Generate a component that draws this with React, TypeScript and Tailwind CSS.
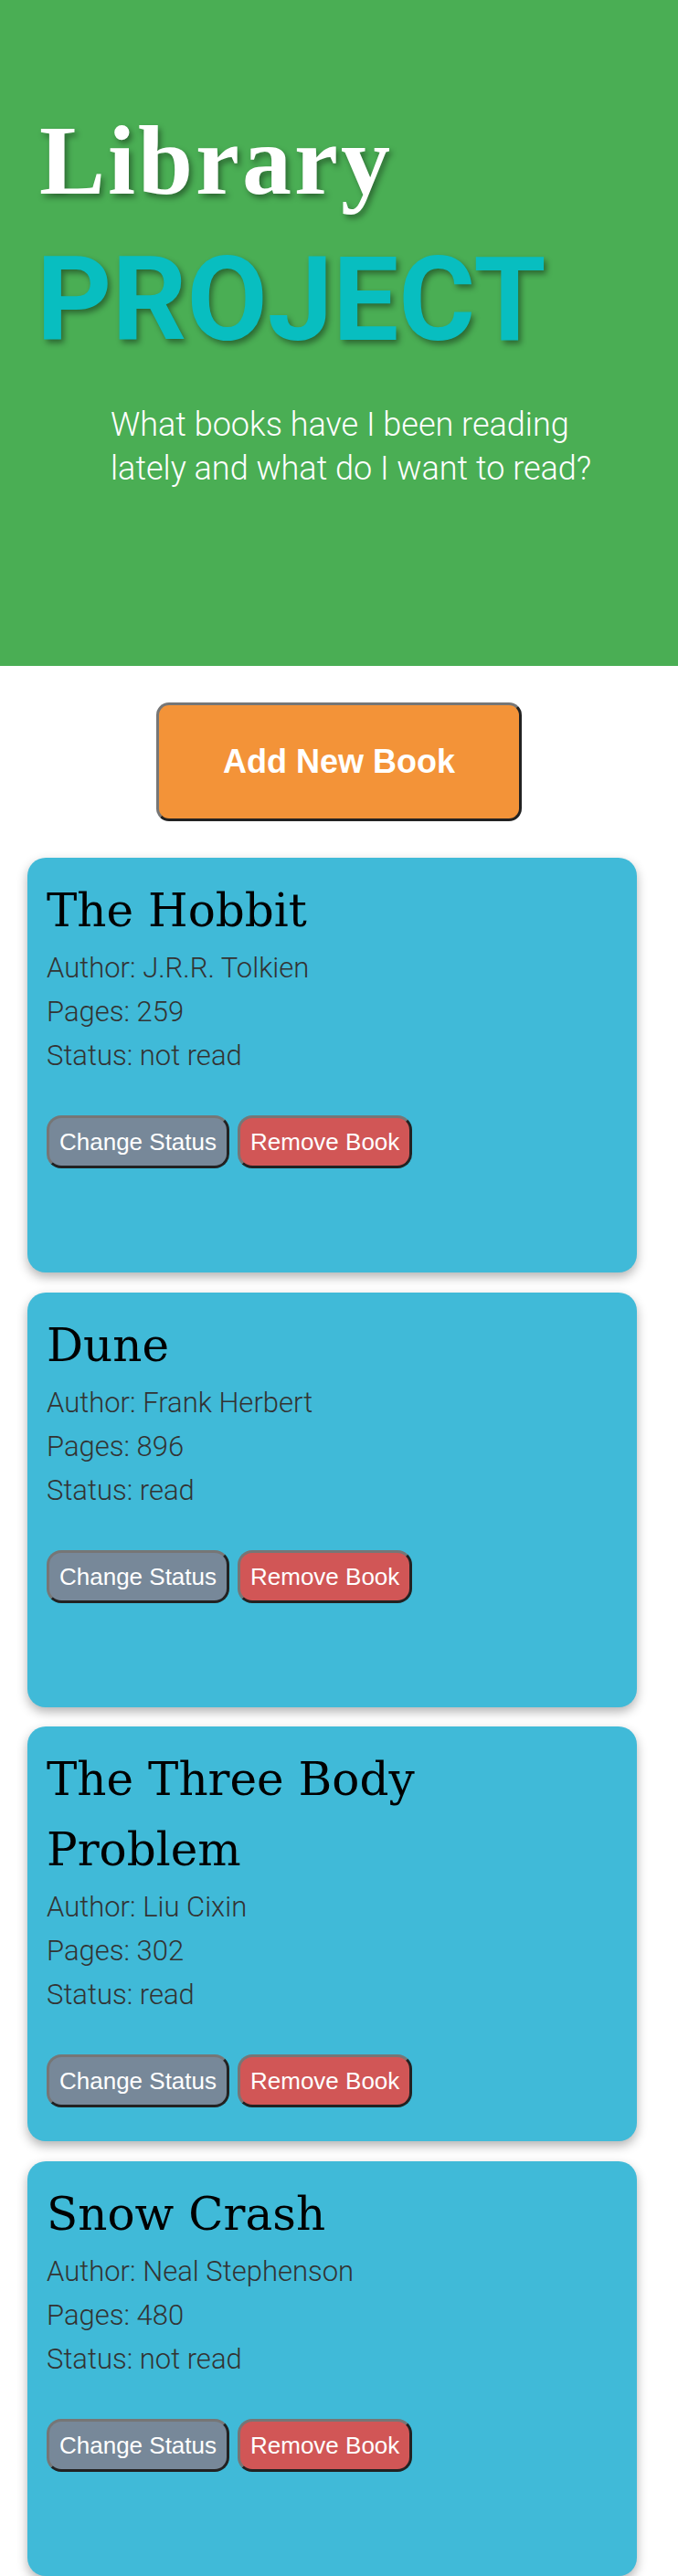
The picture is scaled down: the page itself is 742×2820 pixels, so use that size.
const books = [
  { title: "The Hobbit", author: "J.R.R. Tolkien", pages: 259, status: "not read" },
  { title: "Dune", author: "Frank Herbert", pages: 896, status: "read" },
  { title: "The Three Body Problem", author: "Liu Cixin", pages: 302, status: "read" },
  { title: "Snow Crash", author: "Neal Stephenson", pages: 480, status: "not read" },
];

function BookCard({ book }: { book: (typeof books)[number] }) {
  return (
    <div className="h-[454px] w-[667px] rounded-[20px] bg-[#40bad8] px-[21px] pt-[20px] shadow-[0_5px_12px_rgba(0,0,0,0.3)]">
      <h2 className="font-['DejaVu_Serif',serif] text-[50px] font-normal leading-[77px] text-black">
        {book.title}
      </h2>
      <div className="font-['Roboto',sans-serif] text-[31px] font-light leading-[48px] text-[#333]">
        <p>Author: {book.author}</p>
        <p>Pages: {book.pages}</p>
        <p>Status: {book.status}</p>
      </div>
      <div className="mt-[41px] flex gap-[9px] font-['Liberation_Sans',Arial,sans-serif] text-[26px] leading-[30px] text-white">
        <button className="rounded-[16px] border-[3px] border-t-[#767676] border-l-[#767676] border-b-[#222] border-r-[#222] bg-[#778899] p-[11px]">
          Change Status
        </button>
        <button className="rounded-[16px] border-[3px] border-t-[#767676] border-l-[#767676] border-b-[#222] border-r-[#222] bg-[#d15656] p-[11px]">
          Remove Book
        </button>
      </div>
    </div>
  );
}

export default function App() {
  return (
    <div className="min-h-screen w-[742px] bg-white">
      <header className="h-[729px] bg-[#4aae54] pt-[122px]">
        <h1 className="pl-[43px] font-['Liberation_Serif',serif] text-[108px] font-bold leading-[108px] tracking-[3px] text-white [text-shadow:3px_4px_6px_rgba(0,0,0,0.4)]">
          Library
        </h1>
        <div className="mt-[34px] pl-[40px] font-['Roboto',sans-serif] text-[128px] font-bold leading-[128px] text-[#08bec0] [text-shadow:3px_4px_6px_rgba(0,0,0,0.4)]">
          PROJECT
        </div>
        <p className="ml-[121px] mt-[49px] w-[560px] font-['Roboto',sans-serif] text-[36px] font-light leading-[48px] text-white">
          What books have I been reading lately and what do I want to read?
        </p>
      </header>

      <div className="flex justify-center pt-[40px]">
        <button className="h-[130px] w-[400px] rounded-[14px] border-[3px] border-t-[#767676] border-l-[#767676] border-b-[#222] border-r-[#222] bg-[#f39338] font-['Liberation_Sans',Arial,sans-serif] text-[36px] font-bold text-white">
          Add New Book
        </button>
      </div>

      <div className="mt-[40px] flex flex-col gap-[21.5px] pl-[30px]">
        {books.map((b) => (
          <BookCard key={b.title} book={b} />
        ))}
      </div>
    </div>
  );
}
